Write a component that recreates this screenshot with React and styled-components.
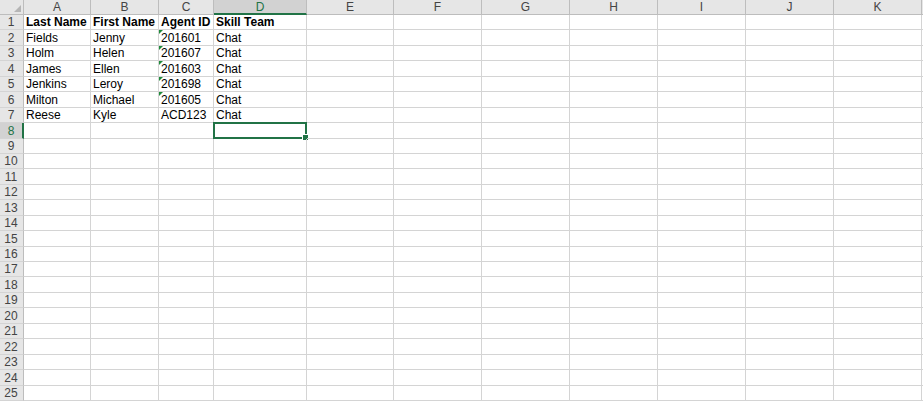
import React from "react";
import styled, { createGlobalStyle, css } from "styled-components";

const GREEN = "#217346";
const GRID = "#d4d4d4";
const HEAD_LINE = "#bdbdbd";

const Global = createGlobalStyle`
  html, body { margin: 0; padding: 0; background: #fff; }
  body { font-family: "Liberation Sans", Arial, sans-serif; overflow: hidden; }
`;

const COLS = ["A", "B", "C", "D", "E", "F", "G", "H", "I", "J", "K"];
const WIDTHS = [67, 68, 55, 93, 87, 88, 88, 88, 88, 88, 88];

const Sheet = styled.div`
  display: grid;
  grid-template-columns: 24px ${WIDTHS.map((w) => `${w}px`).join(" ")} 1px;
  grid-template-rows: 15px repeat(25, 15.44px);
  width: 923px;
  height: 401px;
  overflow: hidden;
`;

const Corner = styled.div`
  position: relative;
  background: #e6e6e6;
  border-right: 1px solid ${HEAD_LINE};
  border-bottom: 1px solid ${HEAD_LINE};
  box-sizing: border-box;
  &::after {
    content: "";
    position: absolute;
    right: 2px;
    bottom: 2px;
    width: 0;
    height: 0;
    border-left: 7px solid transparent;
    border-bottom: 7px solid #b5b5b5;
  }
`;

const ColHeader = styled.div`
  box-sizing: border-box;
  background: ${(p) => (p.$selected ? "#d2d2d2" : "#e6e6e6")};
  border-right: 1px solid ${HEAD_LINE};
  border-bottom: ${(p) => (p.$selected ? `2px solid ${GREEN}` : `1px solid ${HEAD_LINE}`)};
  color: ${(p) => (p.$selected ? GREEN : "#444")};
  font-size: 12px;
  line-height: 14px;
  display: flex;
  justify-content: center;
  align-items: flex-start;
`;

const Filler = styled.div`
  background: ${(p) => (p.$head ? "#e6e6e6" : "#fff")};
  border-bottom: 1px solid ${(p) => (p.$head ? HEAD_LINE : GRID)};
  box-sizing: border-box;
`;

const RowHeader = styled.div`
  box-sizing: border-box;
  background: ${(p) => (p.$selected ? "#d2d2d2" : "#e6e6e6")};
  border-right: ${(p) => (p.$selected ? `2px solid ${GREEN}` : `1px solid ${HEAD_LINE}`)};
  border-bottom: 1px solid ${GRID};
  color: ${(p) => (p.$selected ? GREEN : "#444")};
  font-size: 12px;
  line-height: 14px;
  display: flex;
  justify-content: center;
  align-items: flex-end;
  padding-right: ${(p) => (p.$selected ? "0" : "1px")};
`;

const Cell = styled.div`
  position: relative;
  box-sizing: border-box;
  border-right: 1px solid ${GRID};
  border-bottom: 1px solid ${GRID};
  font-size: 12px;
  line-height: 14px;
  color: #000;
  font-weight: ${(p) => (p.$bold ? 700 : 400)};
  padding-left: 2px;
  white-space: nowrap;
  display: flex;
  align-items: flex-end;
  ${(p) =>
    p.$flag &&
    css`
      &::before {
        content: "";
        position: absolute;
        left: 0;
        top: 0;
        width: 0;
        height: 0;
        border-top: 4px solid #1f8a3b;
        border-right: 4px solid transparent;
      }
    `}
`;

const Selection = styled.div`
  position: absolute;
  top: -1px;
  left: -1px;
  right: -1px;
  bottom: -1px;
  border: 2px solid ${GREEN};
  pointer-events: none;
`;

const FillHandle = styled.div`
  position: absolute;
  right: -4px;
  bottom: -4px;
  width: 5px;
  height: 5px;
  background: ${GREEN};
  border: 1px solid #fff;
`;

const data = [
  ["Last Name", "First Name", "Agent ID", "Skill Team"],
  ["Fields", "Jenny", "201601", "Chat"],
  ["Holm", "Helen", "201607", "Chat"],
  ["James", "Ellen", "201603", "Chat"],
  ["Jenkins", "Leroy", "201698", "Chat"],
  ["Milton", "Michael", "201605", "Chat"],
  ["Reese", "Kyle", "ACD123", "Chat"],
];

export default function App() {
  const rows = [];
  for (let r = 1; r <= 25; r++) {
    const rowData = data[r - 1] || [];
    const selRow = r === 8;
    rows.push(
      <RowHeader key={`h${r}`} $selected={selRow}>
        {r}
      </RowHeader>
    );
    COLS.forEach((c, ci) => {
      const val = rowData[ci] || "";
      const isSel = selRow && c === "D";
      rows.push(
        <Cell
          key={`${c}${r}`}
          $bold={r === 1}
          $flag={c === "C" && r >= 2 && r <= 6}
        >
          {val}
          {isSel && (
            <Selection>
              <FillHandle />
            </Selection>
          )}
        </Cell>
      );
    });
    rows.push(<Filler key={`f${r}`} />);
  }

  return (
    <>
      <Global />
      <Sheet>
        <Corner />
        {COLS.map((c) => (
          <ColHeader key={c} $selected={c === "D"}>
            {c}
          </ColHeader>
        ))}
        <Filler $head />
        {rows}
      </Sheet>
    </>
  );
}
